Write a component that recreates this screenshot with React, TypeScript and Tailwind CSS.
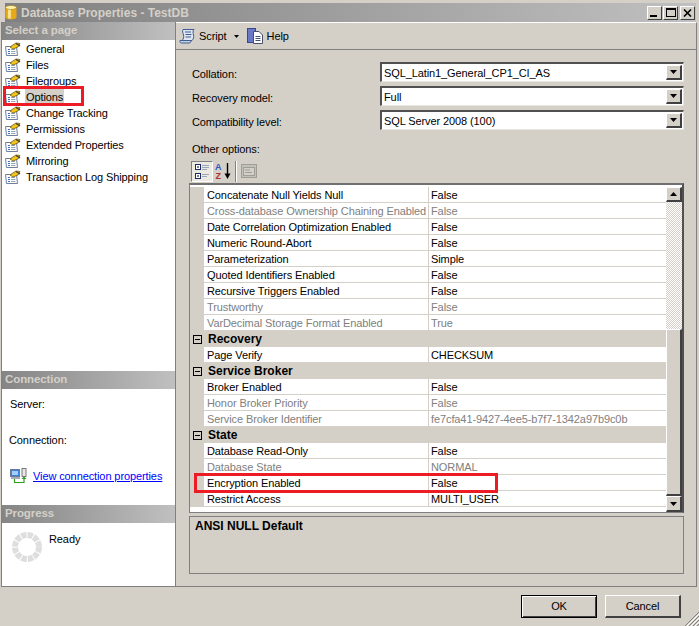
const font = { fontFamily: '"Liberation Sans", Arial, sans-serif' };

function PageIcon() {
  return (
    <svg width="18" height="15" viewBox="0 0 18 15" className="shrink-0">
      <path d="M1.5 4.5 H12.5 L13.5 13.5 H2.5 Z" fill="#fff" stroke="#6d7f9c" />
      <path d="M4 7.5H6M4 9.5H6M4 11.5H6" stroke="#3f6fb5" />
      <path d="M7 7.5H11M7 9.5H11.5M7 11.5H11.5" stroke="#9aa5b8" />
      <path d="M6 5 L12 1 L16 1.5 L14 5 L9 7 Z" fill="#f5c518" stroke="#6b5a12" strokeWidth="0.8" />
      <path d="M12 1.5 L16 4" stroke="#3a3a3a" strokeWidth="1.4" />
    </svg>
  );
}

function WinBtn({ children }: { children: React.ReactNode }) {
  return (
    <div className="w-[15px] h-[14px] bg-[#d4d0c8] border-t border-l border-t-white border-l-white border-r border-b border-r-[#404040] border-b-[#404040] flex items-center justify-center">
      {children}
    </div>
  );
}

function SectionHeader({ label }: { label: string }) {
  return (
    <div className="h-[18px] flex items-center pl-[3px] text-[11.5px] font-bold text-[#d4d0c8] bg-gradient-to-r from-[#858585] to-[#c0c0c0]">
      {label}
    </div>
  );
}

function ArrowBtn({ up, className }: { up?: boolean; className: string }) {
  return (
    <div className={"bg-[#d4d0c8] border-t border-l border-t-white border-l-white border-r-2 border-b-2 border-r-[#404040] border-b-[#404040] flex items-center justify-center shrink-0 " + className}>
      <svg width="7" height="4" viewBox="0 0 7 4">
        <path d={up ? "M3.5 0 L7 4 H0 Z" : "M0 0 H7 L3.5 4 Z"} fill="#000" />
      </svg>
    </div>
  );
}

function Combo({ label, value }: { label: string; value: string }) {
  return (
    <div className="flex items-center h-[18px]">
      <div className="w-[191px] pl-[3px] pt-[4px] text-black">{label}</div>
      <div className="flex-1 h-[20px] flex items-center bg-white border-t-2 border-l-2 border-t-[#505050] border-l-[#505050] border-b border-r border-b-[#e8e6e0] border-r-[#e8e6e0]">
        <div className="flex-1 pl-[2px] pt-[2px] text-black">{value}</div>
        <ArrowBtn className="w-[16px] h-[15px] mr-px" />
      </div>
    </div>
  );
}

type R =
  | { cat: string }
  | { n: string; v: string; off?: boolean };

const rows: R[] = [
  { n: "Concatenate Null Yields Null", v: "False" },
  { n: "Cross-database Ownership Chaining Enabled", v: "False", off: true },
  { n: "Date Correlation Optimization Enabled", v: "False" },
  { n: "Numeric Round-Abort", v: "False" },
  { n: "Parameterization", v: "Simple" },
  { n: "Quoted Identifiers Enabled", v: "False" },
  { n: "Recursive Triggers Enabled", v: "False" },
  { n: "Trustworthy", v: "False", off: true },
  { n: "VarDecimal Storage Format Enabled", v: "True", off: true },
  { cat: "Recovery" },
  { n: "Page Verify", v: "CHECKSUM" },
  { cat: "Service Broker" },
  { n: "Broker Enabled", v: "False" },
  { n: "Honor Broker Priority", v: "False", off: true },
  { n: "Service Broker Identifier", v: "fe7cfa41-9427-4ee5-b7f7-1342a97b9c0b", off: true },
  { cat: "State" },
  { n: "Database Read-Only", v: "False" },
  { n: "Database State", v: "NORMAL", off: true },
  { n: "Encryption Enabled", v: "False" },
  { n: "Restrict Access", v: "MULTI_USER" },
];

function GridRow({ r }: { r: R }) {
  if ("cat" in r) {
    return (
      <div className="h-4 flex items-center bg-[#d4d0c8] text-[12px] font-bold text-black tracking-normal">
        <div className="w-[14px] flex justify-center">
          <div className="w-[9px] h-[9px] border border-black flex items-center justify-center">
            <div className="w-[5px] h-px bg-black" />
          </div>
        </div>
        <div className="pl-[4px]">{r.cat}</div>
      </div>
    );
  }
  const color = r.off ? "text-[#808080]" : "text-black";
  return (
    <div className={"h-4 flex " + color}>
      <div className="w-[14px] bg-[#d4d0c8]" />
      <div className="w-[225px] pl-[3px] bg-white border-b border-r border-[#d4d0c8] leading-[16px] whitespace-nowrap overflow-hidden">{r.n}</div>
      <div className="flex-1 pl-[2px] bg-white border-b border-[#d4d0c8] leading-[16px] whitespace-nowrap overflow-hidden">{r.v}</div>
    </div>
  );
}

export default function App() {
  return (
    <div style={font} className="relative w-[699px] h-[626px] bg-[#d4d0c8] overflow-hidden flex flex-col text-[11px] tracking-[-0.1px]">
      {/* Title bar */}
      <div className="mt-[3px] mx-[5px] mr-[3px] h-[19px] flex items-center bg-gradient-to-r from-[#808080] to-[#c0c0c0] shrink-0">
        <svg width="12" height="15" viewBox="0 0 12 15" className="shrink-0">
          <path d="M0.5 2.5 V12.5 C0.5 15 11.5 15 11.5 12.5 V2.5 Z" fill="#e8a818" />
          <path d="M3 3 V13.5 H6 V3 Z" fill="#fbe38a" />
          <ellipse cx="6" cy="2.5" rx="5.5" ry="2" fill="#fff1a8" stroke="#a57a10" strokeWidth="0.6" />
        </svg>
        <div className="ml-[4px] flex-1 text-[12px] font-bold text-[#d4d0c8] tracking-normal">Database Properties - TestDB</div>
        <div className="flex items-center mr-px">
          <WinBtn><div className="w-[7px] h-[2px] bg-black mt-[7px] mr-[2px]" /></WinBtn>
          <div className="w-px" />
          <WinBtn><div className="w-[10px] h-[9px] border border-black border-t-2" /></WinBtn>
          <div className="w-[2px]" />
          <WinBtn>
            <svg width="9" height="8" viewBox="0 0 9 8"><path d="M1 0.5 L8 7.5 M8 0.5 L1 7.5" stroke="#000" strokeWidth="1.6" /></svg>
          </WinBtn>
        </div>
      </div>

      {/* Main */}
      <div className="flex h-[565px] shrink-0 border-b border-[#808080] ml-px mr-[2px]">
        {/* Left pane */}
        <div className="w-[175px] shrink-0 flex flex-col bg-white border-l border-r border-[#808080] text-black">
          <SectionHeader label="Select a page" />
          <div className="pt-[1px] h-[331px]">
            {["General", "Files", "Filegroups", "Options", "Change Tracking", "Permissions", "Extended Properties", "Mirroring", "Transaction Log Shipping"].map((t) => (
              <div key={t} className="h-4 flex items-center pl-[2px]">
                <PageIcon />
                <span className={"ml-[3px] px-px " + (t === "Options" ? "bg-[#d4d0c8] w-[39px]" : "")}>{t}</span>
              </div>
            ))}
          </div>
          <SectionHeader label="Connection" />
          <div className="h-[116px] flex flex-col pl-[8px]">
            <div className="mt-[7px] h-4 leading-4">Server:</div>
            <div className="mt-[20px] h-4 leading-4 -ml-px">Connection:</div>
            <div className="mt-[20px] h-4 flex items-center">
              <svg width="17" height="16" viewBox="0 0 17 16" className="shrink-0">
                <rect x="0.5" y="1.5" width="9" height="7" fill="#3b7fe0" stroke="#6c7a96" />
                <rect x="2" y="3" width="6" height="4" fill="#9fd0ff" />
                <rect x="1" y="9" width="9" height="2" fill="#a8acb4" />
                <rect x="12" y="0.5" width="4" height="8" fill="#e6e6e6" stroke="#7a7a7a" />
                <path d="M4.5 11 V14.5 H14 V10" fill="none" stroke="#2f9e1f" strokeWidth="1.2" />
                <path d="M11.5 11 L14 8.5 L16.5 11 Z" fill="#2f9e1f" />
              </svg>
              <a className="ml-[6px] text-[#0000ff] underline whitespace-nowrap">View connection properties</a>
            </div>
          </div>
          <SectionHeader label="Progress" />
          <div className="flex-1 flex pl-[9px] pt-[8px]">
            <svg width="32" height="32" viewBox="0 0 32 32" className="shrink-0">
              <circle cx="16" cy="16" r="12" fill="none" stroke="#dedede" strokeWidth="6" strokeDasharray="5.3 1" />
            </svg>
            <div className="ml-[6px] h-4 leading-4">Ready</div>
          </div>
        </div>

        {/* Right pane */}
        <div className="flex-1 flex flex-col border-r border-[#808080] border-t border-t-white">
          <div className="h-[27px] flex items-center border-b border-[#808080] pl-[3px] text-black shrink-0">
            <svg width="17" height="16" viewBox="0 0 17 16" className="shrink-0">
              <path d="M4 1.5 H15 C13.5 3 14 5 14.5 7 C15 9 14.5 11 13 12.5 H3 C4.5 11 5 9 4.5 7 C4 5 3 3 4 1.5 Z" fill="#dfe6f2" stroke="#3e5c8f" />
              <path d="M6 4H12M6.5 6.5H12.5M6.5 9H12" stroke="#3e5c8f" />
              <path d="M1 12.5 H12 C12 14 11.5 15 10 15 H2.5 C1 15 0.5 13.5 1 12.5 Z" fill="#c4d0e4" stroke="#3e5c8f" />
            </svg>
            <span className="ml-[3px]">Script</span>
            <svg width="5" height="3" viewBox="0 0 5 3" className="ml-[7px]"><path d="M0 0H5L2.5 3Z" fill="#000" /></svg>
            <svg width="17" height="16" viewBox="0 0 17 16" className="ml-[8px] shrink-0">
              <rect x="0.5" y="0.5" width="8" height="14" fill="#6a78c8" stroke="#3a4690" />
              <path d="M6.5 3.5 H12 L15.5 7 V15.5 H6.5 Z" fill="#fff" stroke="#44506e" />
              <path d="M8.5 8.5H13.5M8.5 10.5H13.5M8.5 12.5H13.5" stroke="#44506e" />
            </svg>
            <span className="ml-[3px]">Help</span>
          </div>

          <div className="flex-1 flex flex-col pl-[13px] pr-[12px] pt-[13px] pb-[12px] text-black">
            <div className="flex flex-col gap-[6px]">
              <Combo label="Collation:" value="SQL_Latin1_General_CP1_CI_AS" />
              <Combo label="Recovery model:" value="Full" />
              <Combo label="Compatibility level:" value="SQL Server 2008 (100)" />
            </div>
            <div className="mt-[12px] h-4 leading-4 pl-[3px]">Other options:</div>
            {/* Grid toolbar */}
            <div className="mt-[3px] h-[22px] flex items-center pl-[2px]">
              <div className="w-[22px] h-[21px] bg-[#ece9e2] border-t border-l border-t-[#808080] border-l-[#808080] border-r border-b border-r-white border-b-white flex items-center justify-center">
                <svg width="17" height="17" viewBox="0 0 17 17">
                  <rect x="1.5" y="1.5" width="5" height="5" fill="#fff" stroke="#1a2a6a" />
                  <path d="M3 4H5" stroke="#000" />
                  <rect x="1.5" y="10.5" width="5" height="5" fill="#fff" stroke="#1a2a6a" />
                  <path d="M3 13H5" stroke="#000" />
                  <path d="M8 2.5H15M8 4.5H15M8 6.5H13M8 11.5H15M8 13.5H13" stroke="#9aa5b8" />
                </svg>
              </div>
              <svg width="17" height="18" viewBox="0 0 17 18" className="ml-[2px] shrink-0">
                <text x="0" y="8" fontSize="9" fontWeight="bold" fill="#2f57c0" fontFamily="Liberation Sans">A</text>
                <text x="0.5" y="17" fontSize="9" fontWeight="bold" fill="#b03030" fontFamily="Liberation Sans">Z</text>
                <path d="M12.5 1V14" stroke="#000" strokeWidth="1.4" />
                <path d="M9.5 11.5H15.5L12.5 17Z" fill="#000" />
              </svg>
              <div className="ml-[3px] w-px h-[21px] bg-[#808080] border-r border-white box-content" />
              <svg width="17" height="15" viewBox="0 0 17 15" className="ml-[4px] shrink-0">
                <rect x="0.5" y="0.5" width="15" height="13" fill="#c4c1b9" stroke="#a09d96" />
                <rect x="2.5" y="3.5" width="11" height="8" fill="#d4d0c8" stroke="#a09d96" />
                <path d="M4 6H9M4 8.5H11" stroke="#a09d96" />
              </svg>
            </div>
            {/* Property grid */}
            <div className="mt-[1px] h-[330px] flex bg-white border-t-2 border-l border-t-[#707070] border-l-[#808080] border-r-2 border-b border-r-[#505050] border-b-[#808080] shrink-0">
              <div className="flex-1 flex flex-col pt-[2px] min-w-0">
                {rows.map((r, i) => <GridRow key={i} r={r} />)}
              </div>
              <div className="w-[16px] flex flex-col pt-[2px] shrink-0">
                <ArrowBtn up className="w-[16px] h-[15px]" />
                <div className="h-[127px] bg-[repeating-conic-gradient(#d4d0c8_0_25%,#ffffff_0_50%)] bg-[length:2px_2px]" />
                <div className="flex-1 bg-[#d4d0c8] border-t border-l border-t-white border-l-white border-r-2 border-b-2 border-r-[#404040] border-b-[#404040]" />
                <ArrowBtn className="w-[16px] h-[16px]" />
              </div>
            </div>
            {/* Description */}
            <div className="mt-[3px] flex-1 border border-[#808080] pl-[5px] pt-[1px] font-bold text-[12px] leading-4 tracking-normal">ANSI NULL Default</div>
          </div>
        </div>
      </div>

      {/* Buttons */}
      <div className="flex justify-end gap-[8px] pr-[18px] pt-[8px]">
        <button className="w-[76px] h-[23px] border border-black bg-[#d4d0c8] text-black shadow-[inset_1px_1px_0_#fff,inset_-1px_-1px_0_#404040]">OK</button>
        <button className="w-[76px] h-[23px] bg-[#d4d0c8] text-black border-t border-l border-t-white border-l-white border-r-2 border-b-2 border-r-[#404040] border-b-[#404040]">Cancel</button>
      </div>

      {/* Size grip */}
      <svg width="14" height="14" viewBox="0 0 14 14" className="absolute right-0 bottom-0">
        <path d="M0 14L14 0M4 14L14 4M8 14L14 8M12 14L14 12" stroke="#808080" />
        <path d="M2 14L14 2M6 14L14 6M10 14L14 10" stroke="#fff" />
      </svg>

      {/* Red annotations */}
      <div className="absolute left-[3px] top-[86px] w-[81px] h-[20px] border-[3px] border-[#ed1c24]" />
      <div className="absolute left-[194px] top-[473px] w-[304px] h-[20px] border-[3px] border-[#ed1c24]" />
    </div>
  );
}
